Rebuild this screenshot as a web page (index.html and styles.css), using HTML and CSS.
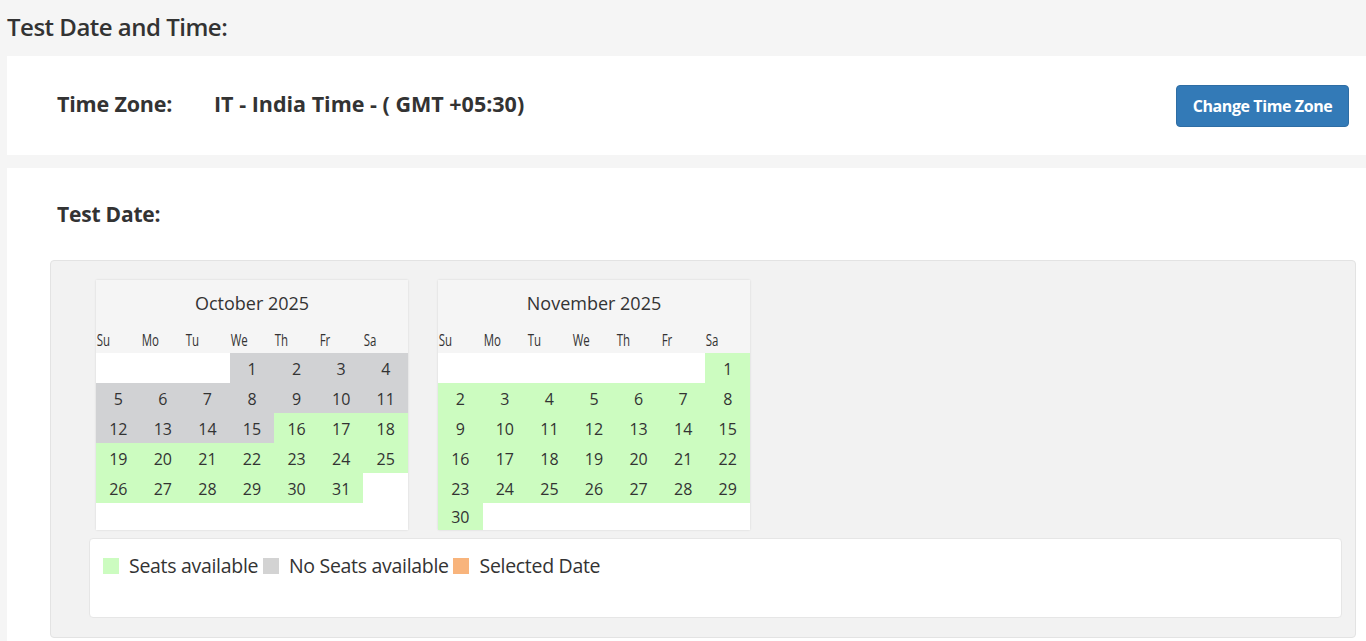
FILE: index.html
```html
<!DOCTYPE html>
<html lang="en">
<head>
<meta charset="utf-8">
<title>Test Date and Time</title>
<link rel="stylesheet" href="styles.css">
</head>
<body>
<h2 class="page-title">Test Date and Time:</h2>

<section class="panel tz-panel">
  <div class="tz-label">Time Zone:</div>
  <div class="tz-value">IT - India Time - ( GMT +05:30)</div>
  <button class="btn-primary" type="button">Change Time Zone</button>
</section>

<section class="panel date-panel">
  <h3 class="date-label">Test Date:</h3>
  <div class="picker-well">
    <div class="months">
      <div class="cal">
        <div class="cal-title">October 2025</div>
        <div class="cal-dow"><span>Su</span><span>Mo</span><span>Tu</span><span>We</span><span>Th</span><span>Fr</span><span>Sa</span></div>
        <div class="cal-days">
          <span class="e"></span><span class="e"></span><span class="e"></span><span class="n">1</span><span class="n">2</span><span class="n">3</span><span class="n">4</span>
          <span class="n">5</span><span class="n">6</span><span class="n">7</span><span class="n">8</span><span class="n">9</span><span class="n">10</span><span class="n">11</span>
          <span class="n">12</span><span class="n">13</span><span class="n">14</span><span class="n">15</span><span class="a">16</span><span class="a">17</span><span class="a">18</span>
          <span class="a">19</span><span class="a">20</span><span class="a">21</span><span class="a">22</span><span class="a">23</span><span class="a">24</span><span class="a">25</span>
          <span class="a">26</span><span class="a">27</span><span class="a">28</span><span class="a">29</span><span class="a">30</span><span class="a">31</span><span class="e"></span>
          <span class="e"></span><span class="e"></span><span class="e"></span><span class="e"></span><span class="e"></span><span class="e"></span><span class="e"></span>
        </div>
      </div>
      <div class="cal">
        <div class="cal-title">November 2025</div>
        <div class="cal-dow"><span>Su</span><span>Mo</span><span>Tu</span><span>We</span><span>Th</span><span>Fr</span><span>Sa</span></div>
        <div class="cal-days">
          <span class="e"></span><span class="e"></span><span class="e"></span><span class="e"></span><span class="e"></span><span class="e"></span><span class="a">1</span>
          <span class="a">2</span><span class="a">3</span><span class="a">4</span><span class="a">5</span><span class="a">6</span><span class="a">7</span><span class="a">8</span>
          <span class="a">9</span><span class="a">10</span><span class="a">11</span><span class="a">12</span><span class="a">13</span><span class="a">14</span><span class="a">15</span>
          <span class="a">16</span><span class="a">17</span><span class="a">18</span><span class="a">19</span><span class="a">20</span><span class="a">21</span><span class="a">22</span>
          <span class="a">23</span><span class="a">24</span><span class="a">25</span><span class="a">26</span><span class="a">27</span><span class="a">28</span><span class="a">29</span>
          <span class="a">30</span><span class="e"></span><span class="e"></span><span class="e"></span><span class="e"></span><span class="e"></span><span class="e"></span>
        </div>
      </div>
    </div>
    <div class="legend">
      <span class="sw sw-green"></span>Seats available <span class="sw sw-gray"></span>No Seats available <span class="sw sw-orange"></span>Selected Date
    </div>
  </div>
</section>
</body>
</html>
```

FILE: styles.css
```css
* { box-sizing: border-box; }

html, body {
  margin: 0;
  padding: 0;
  background: #f5f5f5;
  color: #333;
  font-family: "Open Sans", "Noto Sans", sans-serif;
}

body { overflow: hidden; }

.page-title {
  margin: 0;
  padding: 11px 7px 0;
  height: 56px;
  font-size: 24px;
  font-weight: 600;
  line-height: 32px;
  letter-spacing: -0.5px;
  color: #333;
}

.panel {
  background: #fff;
  margin-left: 7px;
}

.tz-panel {
  height: 99px;
  display: flex;
  align-items: center;
  padding: 0 17px 0 50px;
}

.tz-label {
  font-size: 21.5px;
  font-weight: 700;
  width: 157px;
  letter-spacing: -0.2px;
  margin-top: -4px;
}

.tz-value {
  font-size: 21.5px;
  font-weight: 700;
  flex: 1;
  letter-spacing: 0;
  margin-top: -4px;
}

.btn-primary {
  background: #337ab7;
  border: 1px solid #2e6da4;
  border-radius: 4px;
  color: #fff;
  font-family: "Open Sans", sans-serif;
  font-size: 16px;
  font-weight: 700;
  letter-spacing: -0.4px;
  width: 173px;
  height: 42px;
  padding: 0;
  margin-top: 1px;
}

.date-panel {
  margin-top: 13px;
  padding: 31px 10px 20px 43px;
}

.date-label {
  margin: 0 0 31px 7px;
  font-size: 21px;
  font-weight: 700;
  line-height: 30px;
  letter-spacing: -0.2px;
}

.picker-well {
  background: #f2f2f2;
  border: 1px solid #e3e3e3;
  border-radius: 4px;
  padding: 19px 13px 19px 38px;
}

.months {
  display: flex;
  gap: 30px;
  padding-left: 7px;
}

.cal {
  width: 312px;
  background: #f5f5f5;
  box-shadow: 0 0 2px rgba(0,0,0,0.12);
}

.cal-title {
  height: 45px;
  line-height: 46px;
  text-align: center;
  font-size: 18px;
  color: #333;
}

.cal-dow {
  display: grid;
  grid-template-columns: repeat(7, 1fr);
  height: 28px;
}

.cal-dow span {
  display: block;
  padding-left: 1px;
  font-size: 15.5px;
  line-height: 30px;
  transform: scaleX(0.74);
  transform-origin: left center;
  letter-spacing: -0.2px;
}

.cal-days {
  display: grid;
  grid-template-columns: repeat(7, 1fr);
  grid-template-rows: repeat(5, 30px) 27px;
  background: #fff;
}

.cal-days span {
  display: flex;
  align-items: center;
  justify-content: center;
  font-size: 16px;
  padding-top: 1px;
}

.cal-days .n { background: #d1d2d4; }
.cal-days .a { background: #ccfcc0; }
.cal-days .e { background: #fff; }

.legend {
  margin-top: 8px;
  background: #fff;
  border: 1px solid #e6e6e6;
  border-radius: 4px;
  height: 80px;
  padding: 14px 13px 0;
  font-size: 19.5px;
  line-height: 26px;
  letter-spacing: -0.3px;
}

.sw {
  display: inline-block;
  width: 16px;
  height: 16px;
  vertical-align: -1px;
  margin-right: 10px;
}

.sw-green { background: #ccfcc0; }
.sw-gray { background: #d3d3d3; }
.sw-orange { background: #f8b47c; }
```
